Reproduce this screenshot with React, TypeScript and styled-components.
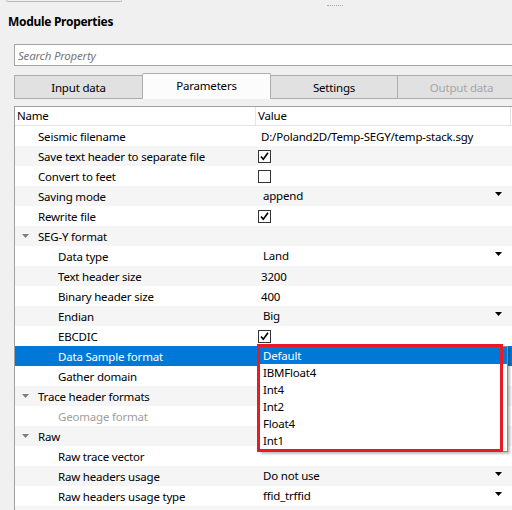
import styled, { createGlobalStyle } from "styled-components";

type Value =
  | { kind: "text"; text: string }
  | { kind: "check"; on: boolean }
  | { kind: "combo"; text: string }
  | { kind: "none" };

type Row = {
  name: string;
  level: number;
  group?: boolean;
  disabled?: boolean;
  selected?: boolean;
  value: Value;
};

const none: Value = { kind: "none" };

const rows: Row[] = [
  { name: "Seismic filename", level: 0, value: { kind: "text", text: "D:/Poland2D/Temp-SEGY/temp-stack.sgy" } },
  { name: "Save text header to separate file", level: 0, value: { kind: "check", on: true } },
  { name: "Convert to feet", level: 0, value: { kind: "check", on: false } },
  { name: "Saving mode", level: 0, value: { kind: "combo", text: "append" } },
  { name: "Rewrite file", level: 0, value: { kind: "check", on: true } },
  { name: "SEG-Y format", level: 0, group: true, value: none },
  { name: "Data type", level: 1, value: { kind: "combo", text: "Land" } },
  { name: "Text header size", level: 1, value: { kind: "text", text: "3200" } },
  { name: "Binary header size", level: 1, value: { kind: "text", text: "400" } },
  { name: "Endian", level: 1, value: { kind: "combo", text: "Big" } },
  { name: "EBCDIC", level: 1, value: { kind: "check", on: true } },
  { name: "Data Sample format", level: 1, selected: true, value: none },
  { name: "Gather domain", level: 1, value: none },
  { name: "Trace header formats", level: 0, group: true, value: none },
  { name: "Geomage format", level: 1, disabled: true, value: none },
  { name: "Raw", level: 0, group: true, value: none },
  { name: "Raw trace vector", level: 1, value: none },
  { name: "Raw headers usage", level: 1, value: { kind: "combo", text: "Do not use" } },
  { name: "Raw headers usage type", level: 1, value: { kind: "combo", text: "ffid_trffid" } },
];

const tabs = [
  { label: "Input data", width: 128 },
  { label: "Parameters", width: 128, active: true },
  { label: "Settings", width: 127 },
  { label: "Output data", width: 128, disabled: true },
];

const formats = ["Default", "IBMFloat4", "Int4", "Int2", "Float4", "Int1"];

function Triangle({ color }: { color: string }) {
  return (
    <svg width="7" height="4" viewBox="0 0 7 4">
      <polygon points="0,0 7,0 3.5,4" fill={color} />
    </svg>
  );
}

function Check({ on }: { on: boolean }) {
  return (
    <CheckBox>
      {on && (
        <svg width="11" height="11" viewBox="0 0 11 11">
          <path d="M2 5.5 L4.3 8.3 L9 1.8" stroke="#000" strokeWidth="1.6" fill="none" />
        </svg>
      )}
    </CheckBox>
  );
}

function ValueView({ value }: { value: Value }) {
  switch (value.kind) {
    case "text":
      return <PlainValue>{value.text}</PlainValue>;
    case "check":
      return <Check on={value.on} />;
    case "combo":
      return (
        <Combo>
          <span>{value.text}</span>
          <Triangle color="#000" />
        </Combo>
      );
    default:
      return null;
  }
}

export default function App() {
  return (
    <>
      <GlobalStyle />
      <Page>
        <TopStrip>
          <PrevBox />
          <Grip />
        </TopStrip>
        <Title>Module Properties</Title>
        <Search readOnly placeholder="Search Property" />
        <TabBar>
          {tabs.map((t) => (
            <Tab key={t.label} $w={t.width} $active={t.active} $disabled={t.disabled}>
              {t.label}
            </Tab>
          ))}
        </TabBar>
        <Tree>
          <Header>
            <HeadCell $w={241}>Name</HeadCell>
            <HeadCell $w={255}>Value</HeadCell>
          </Header>
          {rows.map((r, i) => (
            <TreeRow key={r.name} $alt={i % 2 === 1} $selected={r.selected}>
              <NameCell $level={r.level} $disabled={r.disabled}>
                {r.group && (
                  <Arrow>
                    <Triangle color="#808080" />
                  </Arrow>
                )}
                {r.name}
              </NameCell>
              <ValueCell>
                <ValueView value={r.value} />
              </ValueCell>
            </TreeRow>
          ))}
          <TreeRow $alt />
        </Tree>

        <Popup>
          {formats.map((f, i) => (
            <PopupItem key={f} $hover={i === 0}>
              {f}
            </PopupItem>
          ))}
        </Popup>
        <Highlight />
      </Page>
    </>
  );
}

const GlobalStyle = createGlobalStyle`
  html, body {
    margin: 0;
    padding: 0;
    background: #f0f0f0;
  }
  body {
    font-family: "Segoe UI", "Noto Sans", sans-serif;
    font-size: 11.5px;
    letter-spacing: -0.2px;
    color: #000;
  }
`;

const Page = styled.div`
  position: relative;
  width: 512px;
  height: 510px;
  overflow: hidden;
  display: flex;
  flex-direction: column;
  background: #f0f0f0;
`;

const TopStrip = styled.div`
  display: flex;
  align-items: flex-start;
  height: 12px;
  flex-shrink: 0;
`;

const PrevBox = styled.div`
  margin-left: 6px;
  width: 114px;
  height: 1px;
  border: 1px solid #b9b9b9;
  border-top: none;
  border-radius: 0 0 3px 3px;
`;

const Grip = styled.div`
  margin-left: 205px;
  margin-top: 5px;
  width: 16px;
  border-top: 1px dotted #a8a8a8;
`;

const Title = styled.div`
  padding-left: 8px;
  height: 20px;
  line-height: 20px;
  font-size: 12px;
  font-weight: bold;
  letter-spacing: -0.3px;
  flex-shrink: 0;
`;

const Search = styled.input`
  margin: 12px 0 0 14px;
  height: 22px;
  box-sizing: border-box;
  width: 500px;
  border: 1px solid #a5a5a5;
  border-right: none;
  background: #fff;
  padding: 0 3px;
  font: inherit;
  letter-spacing: inherit;
  outline: none;
  flex-shrink: 0;

  &::placeholder {
    color: #787878;
    font-style: italic;
  }
`;

const TabBar = styled.div`
  display: flex;
  align-items: flex-end;
  margin-top: 7px;
  padding-left: 14px;
  height: 26px;
  flex-shrink: 0;
`;

const Tab = styled.div<{ $w: number; $active?: boolean; $disabled?: boolean }>`
  flex-shrink: 0;
  box-sizing: border-box;
  width: ${(p) => p.$w + 1}px;
  margin-right: -1px;
  height: ${(p) => (p.$active ? 26 : 24)}px;
  padding-bottom: ${(p) => (p.$active ? 3 : 0)}px;
  display: flex;
  align-items: center;
  justify-content: center;
  border: 1px solid #adadad;
  border-bottom: ${(p) => (p.$active ? "none" : "1px solid #adadad")};
  border-radius: ${(p) => (p.$active ? "2px 2px 0 0" : "0")};
  background: ${(p) => (p.$active ? "#fcfcfc" : "#e1e1e1")};
  color: ${(p) => (p.$disabled ? "#a6a6a6" : "#000")};
  position: relative;
  z-index: ${(p) => (p.$active ? 1 : 0)};
`;

const Tree = styled.div`
  margin: 7px 0 0 14px;
  flex: 1;
  border-left: 1px solid #a0a0a0;
  border-top: 1px solid #a0a0a0;
  background: #fff;
  overflow: hidden;
`;

const Header = styled.div`
  display: flex;
  height: 18px;
  border-bottom: 1px solid #e5e5e5;
  background: #fff;
`;

const HeadCell = styled.div<{ $w: number }>`
  width: ${(p) => p.$w}px;
  box-sizing: border-box;
  border-right: 1px solid #e5e5e5;
  padding-left: 2px;
  line-height: 18px;
  flex-shrink: 0;
`;

const TreeRow = styled.div<{ $alt?: boolean; $selected?: boolean }>`
  display: flex;
  height: 20px;
  align-items: center;
  background: ${(p) => (p.$selected ? "#0078d7" : p.$alt ? "#f5f5f5" : "#fff")};
  color: ${(p) => (p.$selected ? "#fff" : "#000")};
`;

const NameCell = styled.div<{ $level: number; $disabled?: boolean }>`
  width: 241px;
  flex-shrink: 0;
  display: flex;
  align-items: center;
  box-sizing: border-box;
  padding-left: ${(p) => 23 + p.$level * 20}px;
  color: ${(p) => (p.$disabled ? "#a0a0a0" : "inherit")};
  white-space: nowrap;
`;

const Arrow = styled.span`
  display: flex;
  margin-left: -16px;
  margin-right: 9px;
`;

const ValueCell = styled.div`
  flex: 1;
  display: flex;
  align-items: center;
  height: 100%;
`;

const PlainValue = styled.span`
  padding-left: 5px;
  white-space: nowrap;
`;

const Combo = styled.div`
  display: flex;
  align-items: center;
  justify-content: space-between;
  width: 246px;
  box-sizing: border-box;
  padding: 0 0 2px 7px;

  svg {
    margin-bottom: 2px;
  }
`;

const CheckBox = styled.div`
  margin-left: 2px;
  width: 13px;
  height: 13px;
  box-sizing: border-box;
  border: 1px solid #333;
  background: #fff;
  display: flex;
  align-items: center;
  justify-content: center;
`;

const Popup = styled.div`
  position: absolute;
  left: 259px;
  top: 346px;
  width: 249px;
  box-sizing: border-box;
  border: 1px solid #8a8a8a;
  background: #fff;
  padding: 0 0 2px;
  box-shadow: 2px 2px 2px rgba(0, 0, 0, 0.25);
`;

const PopupItem = styled.div<{ $hover?: boolean }>`
  height: 17px;
  line-height: 17px;
  padding-left: 3px;
  background: ${(p) => (p.$hover ? "#0078d7" : "transparent")};
  color: ${(p) => (p.$hover ? "#fff" : "#000")};
`;

const Highlight = styled.div`
  position: absolute;
  left: 257px;
  top: 344px;
  width: 246px;
  height: 108px;
  box-sizing: border-box;
  border: 3px solid #e81b24;
  pointer-events: none;
`;
